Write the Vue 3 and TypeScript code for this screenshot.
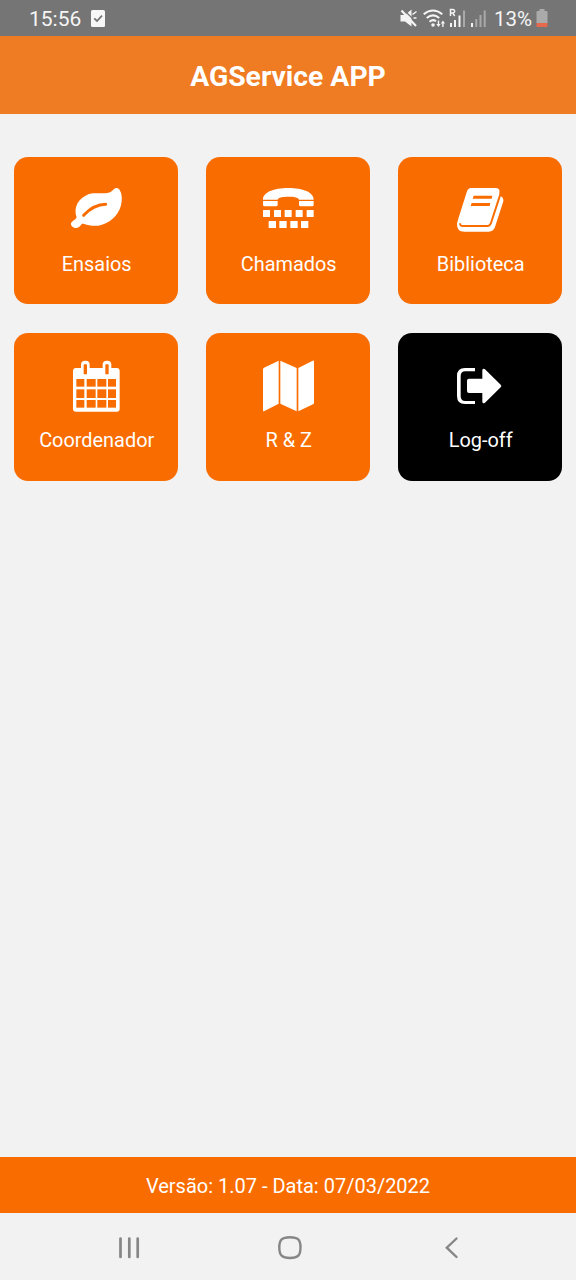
<script setup lang="ts">
type IconName = 'leaf' | 'phone' | 'book' | 'calendar' | 'map' | 'exit'

interface Tile {
  label: string
  icon: IconName
  viewBox: string
  dark?: boolean
}

const upper = '198 84 180 198'
const lower = '198 72 180 198'

const tiles: Tile[] = [
  { label: 'Ensaios', icon: 'leaf', viewBox: upper },
  { label: 'Chamados', icon: 'phone', viewBox: upper },
  { label: 'Biblioteca', icon: 'book', viewBox: upper },
  { label: 'Coordenador', icon: 'calendar', viewBox: lower },
  { label: 'R & Z', icon: 'map', viewBox: lower },
  { label: 'Log-off', icon: 'exit', viewBox: lower, dark: true },
]

const topKeys = [213, 246, 278, 311, 344]
const bottomKeys = [230, 262, 295, 327]
const calendarCols = [229, 260, 292, 324]
const calendarRows = [162, 193, 225]
</script>

<template>
  <div class="screen">
    <div class="status">
      <span class="clock">15:56</span>
      <svg class="check" width="14" height="17" viewBox="0 0 14 17">
        <rect width="14" height="17" rx="1.5" fill="#f7f7f7" />
        <path d="M3.2 8.3 6 11 11 5.6" fill="none" stroke="#757575" stroke-width="1.8" />
      </svg>
      <svg class="signals" width="100" height="24" viewBox="0 0 100 24">
        <path d="M1.500 9h4.500l6.500-5.500v17L6 15.500H1.500z" fill="#f4f4f4" />
        <path d="M5 4 18.500 17.500" stroke="#757575" stroke-width="1.300" />
        <path d="M2.500 4.500 17 20" stroke="#f4f4f4" stroke-width="2.200" />
        <path d="M13.500 8.500l4-3M14.500 12h3" stroke="#f4f4f4" stroke-width="1.500" />
        <g fill="none" stroke="#f4f4f4" stroke-width="2">
          <path d="M24.700 8.200Q34 .8 43.300 8.200" />
          <path d="M27.700 12Q34 6.800 40.300 12" />
          <path d="M30.500 15.700Q34 12.800 37 15.200" />
        </g>
        <circle cx="34" cy="19" r="1.800" fill="#f4f4f4" />
        <path d="M37.300 18h1.500v-3.500h1.400V18h1.500L39.500 21zM41.700 17.500h1.500V21h1.400v-3.500h1.500L43.900 14.500z" fill="#f4f4f4" />
        <path d="M51.500 10V3.500h2.300a1.800 1.800 0 0 1 0 3.600H51.500M53.700 7.100l2 2.900" fill="none" stroke="#f4f4f4" stroke-width="1.500" />
        <path d="M51 17h2v4h-2zM55 14h2v7h-2zM59.500 9.500h2V21h-2z" fill="#f4f4f4" />
        <path d="M64 4.500h2V21h-2z" fill="#a9a9a9" />
        <path d="M72 17h2v4h-2z" fill="#f4f4f4" />
        <path d="M76.300 13h2v8h-2zM80.500 9h2v12h-2zM84.700 4.500h2V21h-2z" fill="#a9a9a9" />
      </svg>
      <span class="percent">13%</span>
      <svg class="battery" width="12" height="18" viewBox="0 0 12 18">
        <path d="M3.500 0h5v2h2a1 1 0 0 1 1 1v11H.5V3a1 1 0 0 1 1-1h2z" fill="#aaa" />
        <path d="M.5 14h11v3a1 1 0 0 1-1 1h-9a1 1 0 0 1-1-1z" fill="#e5694a" />
      </svg>
    </div>

    <header class="header"><h1>AGService APP</h1></header>

    <main class="grid">
      <button v-for="tile in tiles" :key="tile.label" class="tile" :class="{ dark: tile.dark }">
        <svg class="icon" width="60" height="66" :viewBox="tile.viewBox">
          <template v-if="tile.icon === 'leaf'">
            <path
              d="M350 129c5 0 9 4 12 12 3 8 4 17 3 28-3 34-27 61-59 70-19 6-37 4-53-2-5-2-8-1-10 3-4 5-8 9-15 9-8 0-15-5-15-12 0-8 12-11 16-18 2-3-1-7-2-13-2-14 2-29 12-40 10-11 24-19 39-21 19-2 43 3 55-5 7-5 10-11 17-11z"
              fill="#fff"
            />
            <path d="M251 211Q282 178 317 178" fill="none" stroke="#f96d00" stroke-width="9" stroke-linecap="round" />
          </template>
          <template v-else-if="tile.icon === 'phone'">
            <path d="M213 164c0-22 32-35 76-35s76 13 76 35h-44c-2-7-14-9-32-9s-30 2-32 9z" fill="#fff" />
            <path d="M213 168h44v11q0 5-5 5h-34q-5 0-5-5zM321 168h44v11q0 5-5 5h-34q-5 0-5-5z" fill="#fff" />
            <rect v-for="x in topKeys" :key="x" :x="x" y="195" width="21" height="21" rx="1" fill="#fff" />
            <rect v-for="x in bottomKeys" :key="x" :x="x" y="228" width="22" height="21" rx="1" fill="#fff" />
          </template>
          <template v-else-if="tile.icon === 'book'">
            <path
              d="M260 129h74q15 0 13 15l-1 8q14 4 12 17l-25 77q-5 14-19 14h-73q-23 0-22-24 1-5 4-15l25-79q3-12 12-13z"
              fill="#fff"
            />
            <path d="M229 235q-2 8 8 8h73q8 0 11-9l27-83" fill="none" stroke="#f96d00" stroke-width="6" />
            <path d="M348 130h20l-10 27q-2-5-12-7z" fill="#f96d00" />
            <path d="M269 152h56l-2 9h-57zM263 174h56l-2 9h-57z" fill="#f96d00" />
          </template>
          <template v-else-if="tile.icon === 'calendar'">
            <rect x="219" y="129" width="140" height="131" rx="9" fill="#fff" />
            <rect x="243" y="107" width="26" height="46" rx="12" fill="#fff" />
            <rect x="308" y="107" width="26" height="46" rx="12" fill="#fff" />
            <rect x="251" y="118" width="10" height="30" rx="2" fill="#f96d00" />
            <rect x="316" y="118" width="10" height="30" rx="2" fill="#f96d00" />
            <template v-for="y in calendarRows" :key="y">
              <rect v-for="x in calendarCols" :key="x" :x="x" :y="y" :width="x === 229 || x === 324 ? 24 : 27" :height="y === 193 ? 26 : 23" fill="#f96d00" />
            </template>
          </template>
          <template v-else-if="tile.icon === 'map'">
            <path d="M216 128l44-21v129l-44 23q-3 1-3-3V133q0-3 3-5zM265 107l49 22v130l-49-23zM319 129l43-22q4-1 4 3v123q0 3-3 5l-44 21z" fill="#fff" />
          </template>
          <template v-else>
            <path d="M273 129v10h-29q-14 0-14 14v61q0 14 14 14h29v9h-30q-24 0-24-24v-60q0-24 24-24z" fill="#fff" />
            <path d="M295 135q2-7 8-2l47 46q4 4 0 8l-47 46q-6 5-8-2v-27h-40q-6 0-6-6v-31q0-6 6-6h40z" fill="#fff" />
          </template>
        </svg>
        <span class="label">{{ tile.label }}</span>
      </button>
    </main>

    <footer class="version"><span>Versão: 1.07 - Data: 07/03/2022</span></footer>

    <nav class="nav">
      <svg width="576" height="67" viewBox="0 0 576 67" fill="none" stroke="#868686">
        <path d="M120.500 25.500V44M129.300 25.500V44M137.700 25.500V44" stroke-width="2.700" stroke-linecap="round" />
        <path d="M290 24.200c8 0 10.500 2.400 10.500 10.300S298 45 290 45s-10.700-2.600-10.700-10.500S282 24.200 290 24.200z" stroke-width="2.400" />
        <path d="M456.500 25.500 446.800 34.700 456.500 44" stroke-width="2.400" stroke-linecap="round" />
      </svg>
    </nav>
  </div>
</template>

<style scoped>
.screen {
  width: 576px;
  height: 1280px;
  display: flex;
  flex-direction: column;
  background: #f2f2f2;
  font-family: Roboto, "Liberation Sans", sans-serif;
  overflow: hidden;
}
.status {
  height: 36px;
  flex: none;
  display: flex;
  align-items: center;
  background: #757575;
  color: #f5f5f5;
}
.clock {
  width: 62px;
  margin-left: 29px;
  padding-top: 1px;
  font-size: 21px;
  line-height: 36px;
}
.signals {
  margin-left: 294px;
}
.percent {
  margin-left: -5px;
  width: 42px;
  padding-top: 2px;
  font-size: 20.500px;
  line-height: 36px;
}
.header {
  height: 78px;
  flex: none;
  display: flex;
  align-items: center;
  justify-content: center;
  background: #ef7b22;
}
h1 {
  margin: 3px 0 0;
  color: #fff;
  font-size: 28.300px;
  line-height: 34px;
  font-weight: 700;
}
.grid {
  flex: 1;
  display: grid;
  grid-template-columns: repeat(3, 164px);
  grid-template-rows: 147px 148px;
  gap: 29px 28px;
  align-content: start;
  padding: 43px 14.200px 0;
}
.tile {
  display: flex;
  flex-direction: column;
  align-items: center;
  justify-content: flex-start;
  padding: 16px 0 0;
  border: 0;
  border-radius: 14px;
  background: #f96d00;
  color: #fff;
  font-family: inherit;
}
.dark {
  background: #000;
}
.icon {
  flex: none;
}
.label {
  margin-top: 14px;
  padding-left: 1px;
  font-size: 19.900px;
  line-height: 24px;
  white-space: nowrap;
}
.version {
  height: 56px;
  flex: none;
  display: flex;
  align-items: center;
  justify-content: center;
  padding-top: 2px;
  box-sizing: border-box;
  background: #f96d00;
  color: #fff;
  font-size: 20px;
}
.nav {
  height: 67px;
  flex: none;
}
</style>

<style>
body {
  background: #f2f2f2;
}
</style>
